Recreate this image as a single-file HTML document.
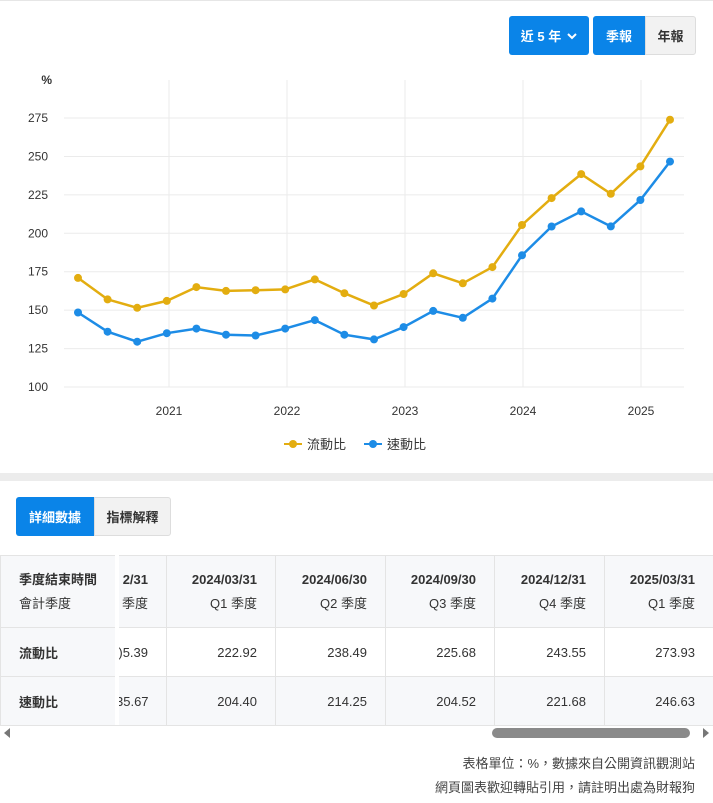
<!DOCTYPE html><html><head><meta charset="utf-8"><style>
body{margin:0;width:713px;height:803px;background:#fff;font-family:"Liberation Sans","Noto Sans CJK TC",sans-serif;position:relative;overflow:hidden;color:#333}
.a{position:absolute}
.btn{position:absolute;font-size:13px;font-weight:bold;display:flex;align-items:center;justify-content:center;box-sizing:border-box}
table{border-collapse:collapse;position:absolute;left:0;top:555px;font-size:13px;table-layout:fixed;width:713px}
td{box-sizing:border-box;border:1px solid #e4e4e4;text-align:right;padding:0 18px 0 0;white-space:nowrap;overflow:hidden}
</style></head><body>
<div class="a" style="left:0;top:0;width:713px;height:1px;background:#e6e6e6"></div>
<div class="btn" style="left:509px;top:16px;width:80px;height:39px;background:#0a84e8;color:#fff;border-radius:3px">近 5 年 <svg width="10" height="8" style="margin-left:6px"><path d="M1 2l4 4 4-4" stroke="#fff" stroke-width="2" fill="none"/></svg></div>
<div class="btn" style="left:593px;top:16px;width:52px;height:39px;background:#0a84e8;color:#fff;border-radius:3px 0 0 3px">季報</div>
<div class="btn" style="left:645px;top:16px;width:51px;height:39px;background:#f2f2f2;color:#333;border:1px solid #ddd;border-radius:0 3px 3px 0">年報</div>
<svg class="a" style="left:0;top:0" width="713" height="470" id="ch"></svg>
<div class="a" style="left:0;top:473px;width:713px;height:8px;background:#ececec"></div>
<div class="btn" style="left:16px;top:497px;width:78px;height:39px;background:#0a84e8;color:#fff;border-radius:3px 0 0 3px">詳細數據</div>
<div class="btn" style="left:94px;top:497px;width:77px;height:39px;background:#f2f2f2;color:#333;border:1px solid #ddd;border-radius:0 3px 3px 0">指標解釋</div>
<table>
<colgroup><col style="width:115px"><col style="width:51px"><col style="width:109px"><col style="width:110px"><col style="width:109px"><col style="width:110px"><col style="width:109px"></colgroup>
<tr style="height:72px;background:#f7f8fa;font-weight:bold"><td style="text-align:left;padding-left:18px;line-height:24px">季度結束時間<br><span style="font-weight:normal">會計季度</span></td><td style="line-height:24px;padding-right:18px">2/31<br><span style="font-weight:normal">季度</span></td><td style="line-height:24px">2024/03/31<br><span style="font-weight:normal">Q1 季度</span></td><td style="line-height:24px">2024/06/30<br><span style="font-weight:normal">Q2 季度</span></td><td style="line-height:24px">2024/09/30<br><span style="font-weight:normal">Q3 季度</span></td><td style="line-height:24px">2024/12/31<br><span style="font-weight:normal">Q4 季度</span></td><td style="line-height:24px">2025/03/31<br><span style="font-weight:normal">Q1 季度</span></td></tr>
<tr style="height:49px"><td style="text-align:left;padding-left:18px;font-weight:bold;background:#f7f8fa">流動比</td><td>)5.39</td><td>222.92</td><td>238.49</td><td>225.68</td><td>243.55</td><td>273.93</td></tr>
<tr style="height:49px;background:#f7f8fa"><td style="text-align:left;padding-left:18px;font-weight:bold">速動比</td><td>35.67</td><td>204.40</td><td>214.25</td><td>204.52</td><td>221.68</td><td>246.63</td></tr>
</table>
<div class="a" style="left:115px;top:555px;width:4px;height:170px;background:#fff"></div>
<svg class="a" style="left:0;top:726px" width="713" height="16"><path d="M4 7l6-5v10z" fill="#777"/><path d="M709 7l-6-5v10z" fill="#777"/><rect x="492" y="2" width="198" height="10" rx="5" fill="#8a8a8a"/></svg>
<div class="a" style="right:18px;top:752px;font-size:13px;color:#444;text-align:right;line-height:24px">表格單位：%，數據來自公開資訊觀測站<br>網頁圖表歡迎轉貼引用，請註明出處為財報狗</div>
<script>
var s='',Y=v=>387-(v-100)*1.537;
s+='<text x="52" y="84" font-size="12" font-weight="bold" text-anchor="end" fill="#333">%</text>';
for(var v=100;v<=275;v+=25){var y=Y(v);s+='<line x1="64" x2="684" y1="'+y+'" y2="'+y+'" stroke="#ebebeb"/><text x="48" y="'+(y+4)+'" font-size="12" text-anchor="end" fill="#333">'+v+'</text>';}
for(var i=0;i<5;i++){var x=169+118*i;s+='<line x1="'+x+'" x2="'+x+'" y1="80" y2="387" stroke="#ebebeb"/><text x="'+x+'" y="415" font-size="12" text-anchor="middle" fill="#333">'+(2021+i)+'</text>';}
var a=[171,157,151.5,156,165,162.5,163,163.5,170,161,153,160.5,174,167.5,178,205.39,222.92,238.49,225.68,243.55,273.93],
b=[148.5,136,129.5,135,138,134,133.5,138,143.5,134,131,139,149.5,145,157.5,185.67,204.40,214.25,204.52,221.68,246.63];
function L(d,c){var p=d.map((v,i)=>(78+29.6*i).toFixed(1)+','+Y(v).toFixed(1));s+='<polyline points="'+p.join(' ')+'" fill="none" stroke="'+c+'" stroke-width="2.5"/>';p.forEach(q=>{q=q.split(',');s+='<circle cx="'+q[0]+'" cy="'+q[1]+'" r="4" fill="'+c+'"/>'});}
L(a,'#e3ad10');L(b,'#1d8ce6');
s+='<line x1="284" x2="302" y1="444" y2="444" stroke="#e3ad10" stroke-width="2"/><circle cx="293" cy="444" r="4" fill="#e3ad10"/><text x="307" y="449" font-size="13" fill="#333">流動比</text>';
s+='<line x1="364" x2="382" y1="444" y2="444" stroke="#1d8ce6" stroke-width="2"/><circle cx="373" cy="444" r="4" fill="#1d8ce6"/><text x="387" y="449" font-size="13" fill="#333">速動比</text>';
document.getElementById('ch').innerHTML=s;
</script>
</body></html>
